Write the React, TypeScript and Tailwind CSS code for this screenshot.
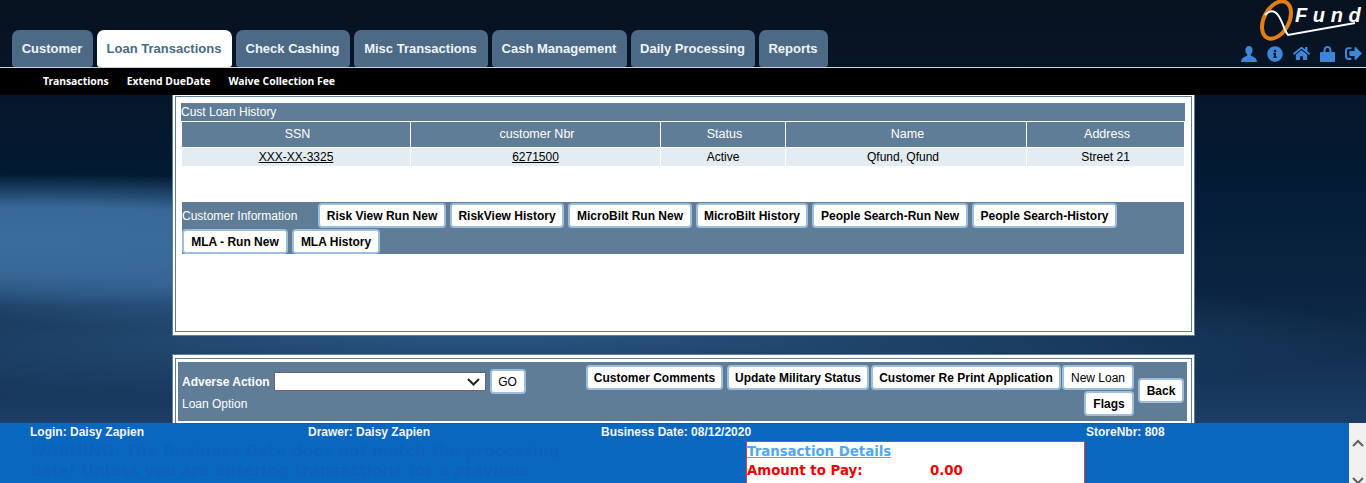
import { FaHome, FaInfoCircle, FaSignOutAlt } from "react-icons/fa";

const tabs = [
	{ label: "Customer", width: "w-[81px]" },
	{ label: "Loan Transactions", width: "w-[135px]", active: true },
	{ label: "Check Cashing", width: "w-[114px]" },
	{ label: "Misc Transactions", width: "w-[134px]" },
	{ label: "Cash Management", width: "w-[135px]" },
	{ label: "Daily Processing", width: "w-[124px]" },
	{ label: "Reports", width: "w-[69px]" },
];

const subLinks = ["Transactions", "Extend DueDate", "Waive Collection Fee"];

const columns = [
	{ label: "SSN", value: "XXX-XX-3325", width: "w-[228px]", valueClass: "underline" },
	{ label: "customer Nbr", value: "6271500", width: "w-[249px]", valueClass: "underline" },
	{ label: "Status", value: "Active", width: "w-[124px]", valueClass: "" },
	{ label: "Name", value: "Qfund, Qfund", width: "w-[240px]", valueClass: "pr-[6px]" },
	{ label: "Address", value: "Street 21", width: "w-[157px]", valueClass: "" },
];

function ActionButton({ label, className = "" }: { label: string; className?: string }) {
	return (
		<button
			className={`h-[25px] shrink-0 whitespace-nowrap rounded-[4px] border-2 border-[#9dbedc] bg-white text-[12px] font-bold text-black ${className}`}
		>
			{label}
		</button>
	);
}

function Logo() {
	return (
		<svg width="108" height="42" viewBox="0 0 108 42" className="-mr-[4px] block">
			<ellipse cx="18.5" cy="20" rx="12.5" ry="20" transform="rotate(28 18.5 20)" fill="none" stroke="#e47d14" strokeWidth="4" />
			<path d="M7 15 C12 10 16 10 20 15 C25 22 26 30 30 35 L97 23" fill="none" stroke="#fff" strokeWidth="2" />
			<text x="37" y="22" fontFamily="'Liberation Sans', sans-serif" fontSize="20" fontWeight="700" fontStyle="italic" letterSpacing="5.6" fill="#fff">
				Fund
			</text>
		</svg>
	);
}

function UserIcon() {
	return (
		<svg width="16" height="16" viewBox="0 0 16 16" fill="currentColor">
			<path d="M8 0c2.300 0 3.600 1.800 3.600 4.200 0 1.800-.8 3.300-1.800 4.100-.3.9.2 1.600 1.200 2 2 .8 4.500 1.600 5 5.700H0c.5-4.100 3-4.900 5-5.700 1-.4 1.500-1.100 1.200-2C5.200 7.500 4.400 6 4.400 4.200 4.400 1.800 5.700 0 8 0z" />
		</svg>
	);
}

function LockIcon() {
	return (
		<svg width="15" height="16" viewBox="0 0 15 16" fill="currentColor">
			<path d="M3.500 6V4.500C3.500 1.800 5 0 7.500 0s4 1.800 4 4.500V6H14c.6 0 1 .4 1 1v8c0 .6-.4 1-1 1H1c-.6 0-1-.4-1-1V7c0-.6.4-1 1-1h2.500zm2 0h4V4.500C9.500 3 8.800 2 7.500 2S5.500 3 5.500 4.500V6z" />
		</svg>
	);
}

export default function App() {
	return (
		<div className="relative flex h-[483px] w-full flex-col overflow-hidden bg-[radial-gradient(ellipse_560px_66px_at_40px_240px,#3a6c9c_0%,#376898_50%,rgba(40,85,130,0)_100%),radial-gradient(ellipse_460px_48px_at_190px_280px,rgba(56,104,154,0.9)_0%,rgba(56,104,154,0)_100%),radial-gradient(ellipse_900px_70px_at_480px_335px,rgba(45,90,135,0.9)_0%,rgba(45,90,135,0)_100%),linear-gradient(180deg,#07121f_0%,#06162a_20%,#031a33_35%,#0c2744_65%,#1c3e66_88%)] font-['Liberation_Sans',Arial,sans-serif]">
			{/* Top bar with tabs and logo */}
			<header className="flex h-[67px] shrink-0 items-end justify-between pl-3 pr-1">
				<nav className="flex gap-1">
					{tabs.map((tab) => (
						<div
							key={tab.label}
							className={`flex h-[37px] items-center justify-center rounded-t-[7px] rounded-b-[3px] pr-px text-[13px] font-bold ${tab.width} ${
								tab.active ? "bg-white text-[#4b6a85]" : "bg-[#4c6a85] text-[#f0f4f8]"
							}`}
						>
							{tab.label}
						</div>
					))}
				</nav>
				<div className="flex h-full flex-col items-end">
					<Logo />
					<div className="mt-[3px] flex items-center gap-[10px] text-[#3f86d6]">
						<UserIcon />
						<FaInfoCircle size={16} />
						<FaHome size={17} />
						<LockIcon />
						<FaSignOutAlt size={17} />
					</div>
				</div>
			</header>
			<div className="h-px shrink-0 bg-[#c3d3e2]" />
			<div className="relative z-10 flex h-[27px] shrink-0 items-center gap-[18px] bg-black pl-[43px] font-['Noto_Sans',sans-serif] text-[10.4px] font-bold text-white">
				{subLinks.map((link) => (
					<span key={link}>{link}</span>
				))}
			</div>

			<main className="-mt-[2px] min-h-0 flex-1 pl-[172px]">
				{/* Loan history panel */}
				<section className="h-[243px] w-[1023px] border border-[#5f7d96] bg-white px-[2px] pb-[3px] pt-[2px]">
					<div className="h-full border border-[#5f7d96] px-[5px] pt-[6px]">
						<div className="flex h-[18px] w-[1004px] items-center bg-[#5f7d96] text-[12px] text-white">Cust Loan History</div>
						<div className="ml-px mt-px flex gap-px">
							{columns.map((col) => (
								<div key={col.label} className={col.width}>
									<div className="flex h-[25px] items-center justify-center bg-[#5f7d96] pl-[3px] text-[12.5px] text-white">{col.label}</div>
									<div className={`mt-px flex h-[18px] items-center justify-center bg-[#e4ecf3] text-[12px] text-black ${col.valueClass}`}>
										{col.value}
									</div>
								</div>
							))}
						</div>
						<div className="ml-px mt-9 flex h-[52px] w-[1002px] flex-wrap content-start items-center gap-x-1 gap-y-px bg-[#5f7d96] pt-px">
							<span className="w-[132px] text-[12px] text-white">Customer Information</span>
							<ActionButton label="Risk View Run New" className="w-[128px]" />
							<ActionButton label="RiskView History" className="w-[114px]" />
							<ActionButton label="MicroBilt Run New" className="w-[124px]" />
							<ActionButton label="MicroBilt History" className="w-[112px]" />
							<ActionButton label="People Search-Run New" className="w-[156px]" />
							<ActionButton label="People Search-History" className="w-[145px]" />
							<ActionButton label="MLA - Run New" className="w-[106px]" />
							<ActionButton label="MLA History" className="w-[88px]" />
						</div>
					</div>
				</section>

				{/* Action panel, runs under the footer */}
				<section className="mt-[18px] h-[80px] w-[1023px] border border-[#5f7d96] bg-white px-[2px] pt-[3px]">
					<div className="h-full border border-[#5f7d96] px-[2px] pt-[3px]">
						<div className="flex h-[59px] w-[1009px] justify-between bg-[#5f7d96] pl-[4px] pr-[3px]">
							<div className="pt-[7px] text-[12px] text-white">
								<div className="flex items-center gap-1">
									<span className="font-bold">Adverse Action</span>
									<div className="relative flex h-[19px] w-[212px] items-center justify-end border border-[#666] bg-white pr-[5px]">
										<svg width="13" height="8" viewBox="0 0 13 8" fill="none" stroke="#222" strokeWidth="2">
											<path d="M1 1l5.500 5.500L12 1" />
										</svg>
									</div>
									<ActionButton label="GO" className="w-[36px] font-normal" />
								</div>
								<div className="mt-px">Loan Option</div>
							</div>
							<div className="flex items-center gap-1 pb-[2px]">
								<div className="flex w-[550px] flex-wrap justify-end gap-x-[2px] gap-y-px">
									<ActionButton label="Customer Comments" className="mr-[2px] w-[137px]" />
									<ActionButton label="Update Military Status" className="w-[142px]" />
									<ActionButton label="Customer Re Print Application" className="-mr-px w-[190px]" />
									<ActionButton label="New Loan" className="w-[72px] font-normal" />
									<ActionButton label="Flags" className="w-[50px]" />
								</div>
								<ActionButton label="Back" className="w-[46px]" />
							</div>
						</div>
					</div>
				</section>
			</main>

			{/* Footer frame */}
			<footer className="flex h-[60px] shrink-0 overflow-hidden">
				<div className="min-w-0 flex-1 bg-[#0a67c0]">
					<div className="flex h-[18px] items-center pl-[30px] text-[12px] font-bold text-[#f2f6fb]">
						<span className="w-[278px]">Login: Daisy Zapien</span>
						<span className="w-[293px]">Drawer: Daisy Zapien</span>
						<span className="w-[485px]">Business Date: 08/12/2020</span>
						<span>StoreNbr: 808</span>
					</div>
					<div className="flex">
						<p className="w-[746px] whitespace-nowrap pl-[30px] font-['DejaVu_Sans',sans-serif] text-[15.4px] font-bold leading-[20px] text-[#0c62bb]">
							WARNING: The Business Date does not match the processing
							<br />
							date! Unless you are entering transactions for a previous
						</p>
						<div className="h-[60px] w-[339px] border border-[#e0403a] bg-white pt-px font-['DejaVu_Sans',sans-serif] text-[13.33px] font-bold">
							<div className="leading-[18px] text-[#4ea8f2] underline">Transaction Details</div>
							<div className="flex pt-[1px] leading-[18px] text-[#f00000]">
								<span className="w-[183px]">Amount to Pay:</span>
								<span>0.00</span>
							</div>
						</div>
					</div>
				</div>
				<div className="flex w-[17px] shrink-0 flex-col items-center justify-between bg-[#f0f0f0] pt-[16px]">
					<svg width="12" height="8" viewBox="0 0 12 8" fill="none" stroke="#606060" strokeWidth="2">
						<path d="M1 7l5-5 5 5" />
					</svg>
					<svg width="12" height="8" viewBox="0 0 12 8" fill="none" stroke="#606060" strokeWidth="2" className="-mb-[2px]">
						<path d="M1 1l5 5 5-5" />
					</svg>
				</div>
			</footer>
		</div>
	);
}
